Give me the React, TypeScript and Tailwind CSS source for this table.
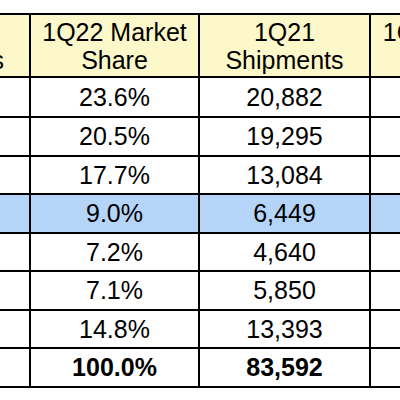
import React from "react";

const rows: { a: string; b: string; blue?: boolean; bold?: boolean }[] = [
  { a: "23.6%", b: "20,882" },
  { a: "20.5%", b: "19,295" },
  { a: "17.7%", b: "13,084" },
  { a: "9.0%", b: "6,449", blue: true },
  { a: "7.2%", b: "4,640" },
  { a: "7.1%", b: "5,850" },
  { a: "14.8%", b: "13,393" },
  { a: "100.0%", b: "83,592", bold: true },
];

export default function App() {
  return (
    <div
      className="w-[400px] h-[400px] overflow-hidden bg-white pt-[13px] text-black"
      style={{ fontFamily: '"Liberation Sans", Arial, sans-serif' }}
    >
      <div className="ml-[-141px] w-max border-2 border-black bg-black grid grid-cols-[168px_167px_169px_168px] grid-rows-[61px_38px_repeat(7,36.5px)] gap-[2px] text-[25px] leading-[28px]">
        <div className="bg-[#fcf8c9] flex items-center justify-center text-center">1Q22<br />Shipments</div>
        <div className="bg-[#fcf8c9] flex items-center justify-center text-center">1Q22 Market<br />Share</div>
        <div className="bg-[#fcf8c9] flex items-center justify-center text-center">1Q21<br />Shipments</div>
        <div className="bg-[#fcf8c9] flex items-center justify-center text-center">1Q21 Market<br />Share</div>
        {rows.map((r, i) => {
          const bg = r.blue ? "bg-[#b5d5f8]" : "bg-white";
          const fw = r.bold ? "font-bold" : "";
          return (
            <React.Fragment key={i}>
              <div className={bg}></div>
              <div className={`${bg} ${fw} flex items-center justify-center`}>{r.a}</div>
              <div className={`${bg} ${fw} flex items-center justify-center`}>{r.b}</div>
              <div className={bg}></div>
            </React.Fragment>
          );
        })}
      </div>
    </div>
  );
}
